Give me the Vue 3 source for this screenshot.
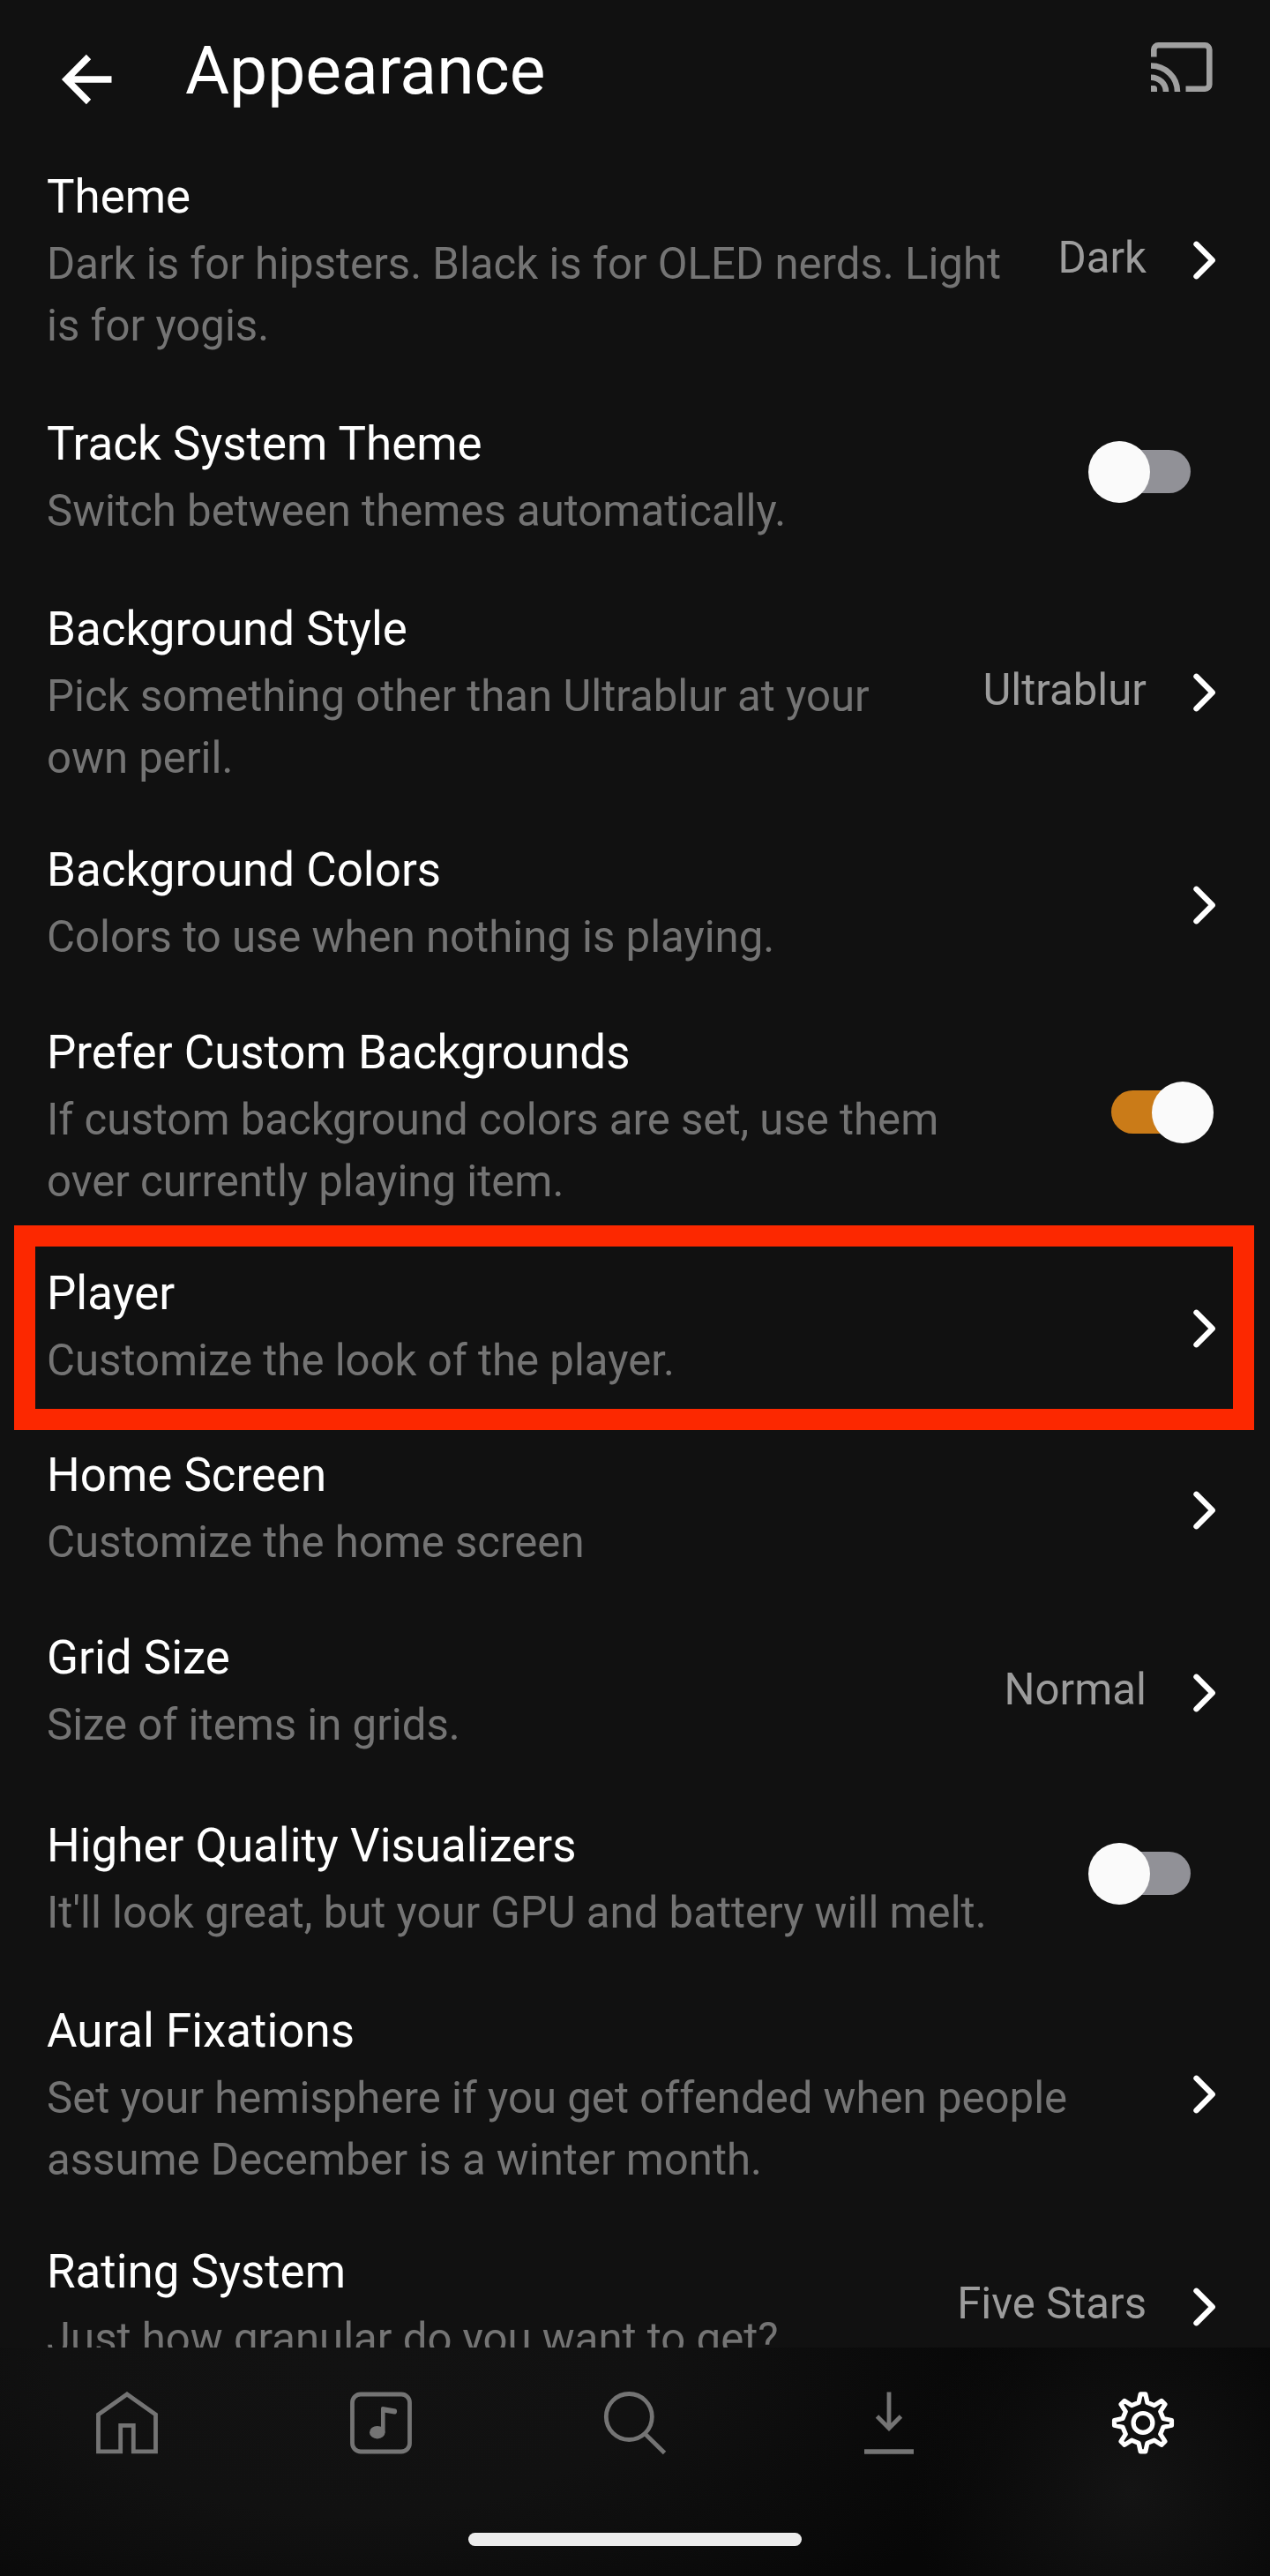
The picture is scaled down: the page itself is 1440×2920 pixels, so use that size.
<script setup>
const rows = [
  { title: 'Theme', desc: ['Dark is for hipsters. Black is for OLED nerds. Light', 'is for yogis.'], value: 'Dark', nav: true, h: 280 },
  { title: 'Track System Theme', desc: ['Switch between themes automatically.'], toggle: 'off', h: 210 },
  { title: 'Background Style', desc: ['Pick something other than Ultrablur at your', 'own peril.'], value: 'Ultrablur', nav: true, h: 273 },
  { title: 'Background Colors', desc: ['Colors to use when nothing is playing.'], nav: true, h: 207 },
  { title: 'Prefer Custom Backgrounds', desc: ['If custom background colors are set, use them', 'over currently playing item.'], toggle: 'on', h: 273 },
  { title: 'Player', desc: ['Customize the look of the player.'], nav: true, boxed: true, h: 206 },
  { title: 'Home Screen', desc: ['Customize the home screen'], nav: true, h: 207 },
  { title: 'Grid Size', desc: ['Size of items in grids.'], value: 'Normal', nav: true, h: 213 },
  { title: 'Higher Quality Visualizers', desc: ["It'll look great, but your GPU and battery will melt."], toggle: 'off', h: 210 },
  { title: 'Aural Fixations', desc: ['Set your hemisphere if you get offended when people', 'assume December is a winter month.'], nav: true, h: 273 },
  { title: 'Rating System', desc: ['Just how granular do you want to get?'], value: 'Five Stars', nav: true, h: 207 },
]

// Eight-toothed gear outline: [angle offset, radius] for each corner of a tooth.
const tooth = [[-12, 23.5], [-5, 32.6], [5, 32.6], [12, 23.5]]
const gear = Array.from({ length: 8 }, (_, i) =>
  tooth.map(([a, r]) => {
    const t = ((i * 45 + a) * Math.PI) / 180
    return `${(36 + r * Math.sin(t)).toFixed(2)},${(35.4 - r * Math.cos(t)).toFixed(2)}`
  }).join(' ')
).join(' ')
</script>

<template>
  <div class="screen">
    <header class="bar">
      <svg class="back" viewBox="0 0 60 60" width="60" height="60"><path d="M58.500 30H8M32.500 4.500 7.200 30l25.300 25.500" fill="none" stroke="#fff" stroke-width="7.500" /></svg>
      <h1>Appearance</h1>
      <svg class="cast" viewBox="0 0 70 56" width="70" height="56" fill="none" stroke="#a0a0a0" stroke-width="6.600">
        <path d="M3.300 16.500V8.300a5 5 0 0 1 5-5h53a5 5 0 0 1 5 5v39.400a5 5 0 0 1-5 5H39.500" />
        <path d="M0 39.700A17 16.300 0 0 1 17 56M0 26.500A30 29.500 0 0 1 30 56" />
        <path d="M0 49h3.500a3.500 3.500 0 0 1 3.500 3.500V56H0z" fill="#a0a0a0" stroke="none" />
      </svg>
    </header>

    <main class="list">
      <section v-for="r in rows" :key="r.title" class="row" :class="{ boxed: r.boxed, tall: r.desc.length > 1 }" :style="{ height: r.h + 'px' }">
        <div class="copy">
          <h2>{{ r.title }}</h2>
          <p v-for="line in r.desc" :key="line">{{ line }}</p>
        </div>
        <div class="side" :class="{ switch: r.toggle }">
          <span v-if="r.value" class="value">{{ r.value }}</span>
          <svg v-if="r.nav" class="chev" viewBox="0 0 26 44" width="26" height="44"><path d="M3.500 3.800 21.700 22 3.500 40.200" fill="none" stroke="#fff" stroke-width="6.400" stroke-linecap="round" stroke-linejoin="round" /></svg>
          <span v-if="r.toggle" class="toggle" :class="r.toggle"><i></i></span>
        </div>
      </section>
    </main>

    <footer class="tabs">
      <nav>
        <div class="tab"><svg viewBox="0 0 72 72" width="72" height="72"><path d="M3.500 26 36 3l32.500 23v41.800H43.300V38.300H28.700v29.500H3.500z" /></svg></div>
        <div class="tab"><svg viewBox="0 0 72 72" width="72" height="72"><rect x="3.500" y="3" width="65" height="65" rx="9.500" /><g class="solid"><ellipse cx="31.800" cy="46.200" rx="8.800" ry="7.300" /><path d="M36 46V19q0-2 2-2l13 2.300a3 3 0 0 1 0 6.200l-10.400-1.800V46z" /></g></svg></div>
        <div class="tab"><svg viewBox="0 0 72 72" width="72" height="72"><circle cx="29.300" cy="28.500" r="26" /><path d="m47 47.500 22.500 22" /></svg></div>
        <div class="tab"><svg viewBox="0 0 72 72" width="72" height="72"><path d="M36 .5v41M22.500 28 36 41.500 49.500 28" /><path d="M8 68h56" stroke-width="5.500" /></svg></div>
        <div class="tab active"><svg viewBox="0 0 72 72" width="72" height="72" stroke-linejoin="round"><circle cx="36" cy="35.400" r="10.900" /><polygon :points="gear" /></svg></div>
      </nav>
      <div class="home-indicator"></div>
    </footer>
  </div>
</template>

<style>
html, body { margin: 0; background: #111; }
</style>
<style scoped>
.screen { width: 1440px; height: 2920px; background: #111; overflow: hidden; display: flex; flex-direction: column; font-family: Roboto, sans-serif; color: #fff; }
.bar { height: 184px; flex: none; display: flex; align-items: flex-start; box-sizing: border-box; padding: 0 65px 0 68px; }
.back { margin-top: 60px; }
h1 { margin: 28px 0 0 82px; font-size: 76.8px; line-height: 104px; font-weight: 400; flex: 1; }
.cast { margin-top: 48px; }
.list { height: 2477px; flex: none; overflow: hidden; }
.row { position: relative; display: flex; justify-content: space-between; box-sizing: border-box; padding: 0 61px 0 53px; }
h2 { margin: 0 0 6px; padding-top: 4px; font-size: 52.9px; line-height: 70px; font-weight: 400; white-space: nowrap; }
p { margin: 0; font-size: 49.13px; line-height: 70px; color: #747474; white-space: nowrap; }
.side { display: flex; align-items: center; height: 157px; }
.tall .side { height: 222px; }
.side.switch { height: 142px; }
.tall .side.switch { height: 213px; }
.value { font-size: 49.13px; color: #9c9c9c; margin: 0 53px 7px 0; }
.boxed::after { content: ''; position: absolute; left: 16px; top: -38px; width: 1406px; height: 232px; box-sizing: border-box; border: 24px solid #fc2800; }
.toggle { position: relative; width: 116px; height: 70px; }
.toggle::before { content: ''; position: absolute; top: 10px; left: 2px; width: 114px; height: 49px; border-radius: 25px; background: #919197; }
.toggle i { position: absolute; top: 0; left: 0; width: 70px; height: 70px; border-radius: 50%; background: #fafafa; }
.off { margin-right: 29px; }
.on { margin-right: 3px; }
.on::before { left: 0; background: #ca7b18; }
.on i { left: 46px; }
.tabs {
  height: 259px;
  flex: none;
  background:
    radial-gradient(circle 250px at 1283px 163px, #141414, #0f0f0f 35%, rgba(6, 6, 6, 0) 100%),
    radial-gradient(ellipse 760px 380px at 400px 20px, #121212, #111 45%, rgba(6, 6, 6, 0) 100%),
    #070707;
}
nav { display: flex; padding-top: 50px; }
.tab { width: 288px; display: flex; justify-content: center; fill: none; stroke: #747474; stroke-width: 4.8px; }
.tab .solid { fill: #747474; stroke: none; }
.tab.active { stroke: #fff; stroke-width: 5.2px; }
.home-indicator { width: 378px; height: 15px; border-radius: 8px; background: #ececec; margin: 88px auto 0; }
</style>
